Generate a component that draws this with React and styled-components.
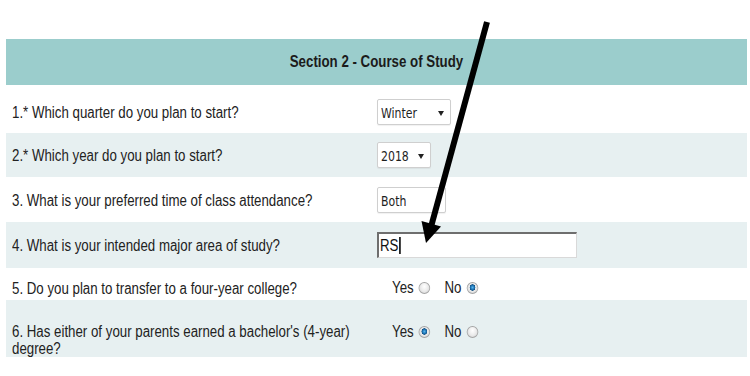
import React from "react";
import styled, { createGlobalStyle } from "styled-components";

const Global = createGlobalStyle`
  html, body { margin: 0; padding: 0; background: #fff; }
  body { font-family: "Liberation Sans", Arial, sans-serif; color: #222; }
  * { box-sizing: border-box; }
`;

const SQ = 0.83;

const Page = styled.div`
  position: relative;
  width: 750px;
  height: 376px;
  padding: 39px 3px 0 6px;
  overflow: hidden;
`;

const Table = styled.div`
  display: flex;
  flex-direction: column;
  width: 741px;
`;

const Header = styled.div`
  height: 46px;
  background: #9bcdcc;
  display: flex;
  align-items: center;
  justify-content: center;
`;

const HeaderText = styled.span`
  display: inline-block;
  font-weight: bold;
  font-size: 16px;
  color: #1b1b1b;
  transform: scaleX(${SQ});
  transform-origin: center;
`;

const Row = styled.div`
  display: grid;
  grid-template-columns: 365px 1fr;
  align-items: ${(p) => (p.$top ? "start" : "center")};
  height: ${(p) => p.$h}px;
  padding-top: ${(p) => p.$pt || 0}px;
  padding-left: 6px;
  background: ${(p) => (p.$alt ? "#e7f0f1" : "#fff")};
`;

const Label = styled.div`
  width: 440px;
  font-size: 16px;
  line-height: 17px;
  color: #222;
  transform: scaleX(${SQ});
  transform-origin: left center;
`;

const Control = styled.div`
  display: flex;
  align-items: center;
`;

const SelectBox = styled.div`
  width: ${(p) => p.$w}px;
  height: 26px;
  border: 1px solid #cfcfcf;
  border-radius: 2px;
  background: #fff;
  box-shadow: 0 1px 1px rgba(0,0,0,0.06);
  display: flex;
  align-items: center;
  padding: 2px 6px 0 3px;
`;

const SelectValue = styled.span`
  display: inline-block;
  font-family: "DejaVu Sans", Verdana, sans-serif;
  font-size: 14px;
  color: #1e1e1e;
  transform: scaleX(0.78);
  transform-origin: left center;
`;

const Caret = styled.span`
  margin-left: auto;
  width: 0;
  height: 0;
  border-left: 3.5px solid transparent;
  border-right: 3.5px solid transparent;
  border-top: 5px solid #222;
`;

const TextInput = styled.div`
  width: 200px;
  height: 26px;
  background: #fff;
  border-top: 2px solid #6e6e6e;
  border-left: 2px solid #6e6e6e;
  border-right: 1px solid #d9d9d9;
  border-bottom: 1px solid #d9d9d9;
  display: flex;
  align-items: center;
  padding-left: 1px;
`;

const InputValue = styled.span`
  display: inline-flex;
  align-items: center;
  font-size: 16px;
  color: #111;
  transform: scaleX(${SQ});
  transform-origin: left center;
`;

const CursorBar = styled.span`
  display: inline-block;
  width: 1.3px;
  height: 17px;
  background: #111;
  margin-left: 1px;
`;

const RadioGroup = styled.div`
  display: flex;
  align-items: center;
  gap: 17px;
  margin-left: 15px;
  transform: scaleX(${SQ});
  transform-origin: left center;
`;

const RadioLabel = styled.label`
  display: flex;
  align-items: center;
  gap: 6px;
  font-size: 16px;
  color: #222;
`;

const Radio = styled.span`
  width: 14px;
  height: 12px;
  border-radius: 50%;
  border: 1px solid #a4a4a4;
  background: ${(p) =>
    p.$on
      ? "radial-gradient(ellipse at 50% 45%, #5ab8ee 0, #1a6fb0 28%, #0d4d80 38%, #ececec 44%, #d0d0d0 100%)"
      : "radial-gradient(ellipse at 50% 35%, #ffffff 0, #ececec 50%, #d0d0d0 100%)"};
  display: inline-block;
`;

const Overlay = styled.svg`
  position: absolute;
  left: 0;
  top: 0;
  pointer-events: none;
`;

function Select({ value, w, caret = true }) {
  return (
    <SelectBox $w={w}>
      <SelectValue>{value}</SelectValue>
      {caret && <Caret />}
    </SelectBox>
  );
}

function YesNo({ yes }) {
  return (
    <RadioGroup>
      <RadioLabel>
        Yes <Radio $on={yes} />
      </RadioLabel>
      <RadioLabel>
        No <Radio $on={!yes} />
      </RadioLabel>
    </RadioGroup>
  );
}

export default function App() {
  return (
    <>
      <Global />
      <Page>
        <Table>
          <Header>
            <HeaderText>Section 2 - Course of Study</HeaderText>
          </Header>
          <Row $h={48} $pt={6}>
            <Label>1.* Which quarter do you plan to start?</Label>
            <Control>
              <Select value="Winter" w={74} />
            </Control>
          </Row>
          <Row $h={44} $alt>
            <Label>2.* Which year do you plan to start?</Label>
            <Control>
              <Select value="2018" w={54} />
            </Control>
          </Row>
          <Row $h={45} $pt={1}>
            <Label>3. What is your preferred time of class attendance?</Label>
            <Control>
              <Select value="Both" w={69} caret={false} />
            </Control>
          </Row>
          <Row $h={46} $alt>
            <Label>4. What is your intended major area of study?</Label>
            <Control>
              <TextInput>
                <InputValue>
                  RS
                  <CursorBar />
                </InputValue>
              </TextInput>
            </Control>
          </Row>
          <Row $h={32} $pt={8}>
            <Label>5. Do you plan to transfer to a four-year college?</Label>
            <Control>
              <YesNo yes={false} />
            </Control>
          </Row>
          <Row $h={57} $pt={23} $top $alt>
            <Label>6. Has either of your parents earned a bachelor's (4-year) degree?</Label>
            <Control>
              <YesNo yes={true} />
            </Control>
          </Row>
        </Table>
        <Overlay width="750" height="376" viewBox="0 0 750 376">
          <line x1="487" y1="22" x2="431.5" y2="225" stroke="#000" strokeWidth="6" />
          <polygon points="426,243 441,226.5 421.5,221" fill="#000" />
        </Overlay>
      </Page>
    </>
  );
}
